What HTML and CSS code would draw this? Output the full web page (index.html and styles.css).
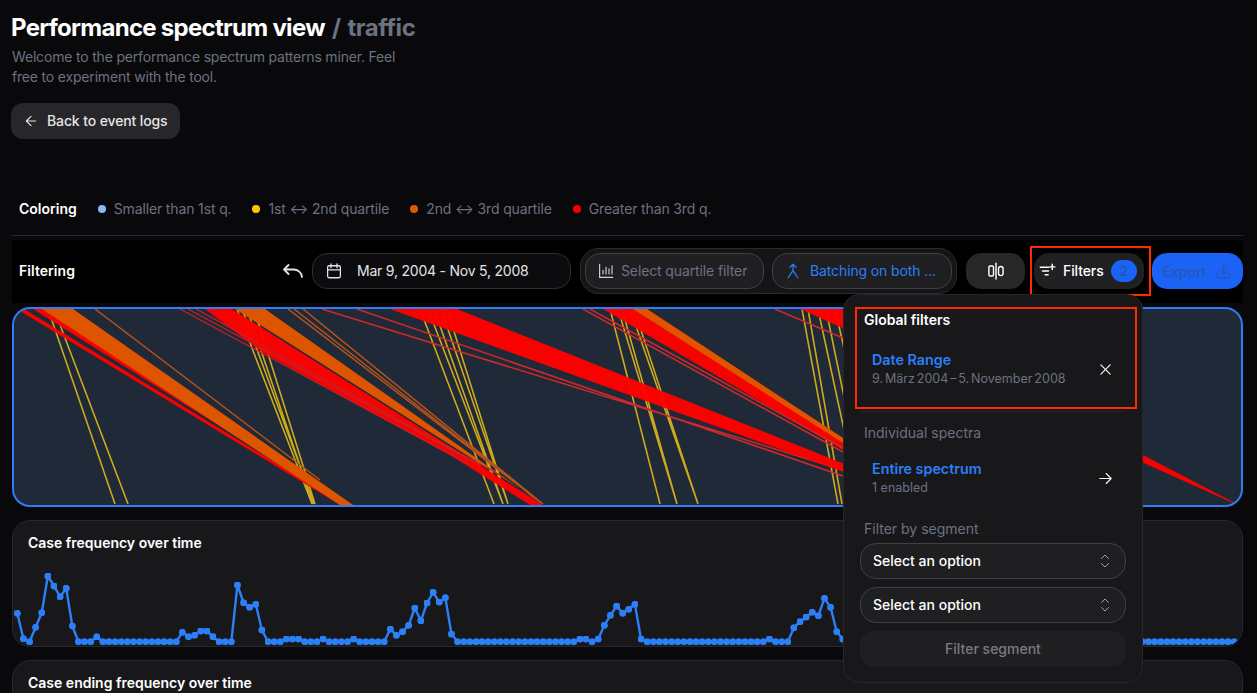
FILE: index.html
```html
<!DOCTYPE html>
<html lang="en">
<head>
<meta charset="utf-8">
<title>Performance spectrum view</title>
<link rel="stylesheet" href="styles.css">
</head>
<body>
<main class="page">
  <header class="head">
    <h1 class="title">Performance spectrum view <span class="title-sub">/ traffic</span></h1>
    <p class="intro">Welcome to the performance spectrum patterns miner. Feel free to experiment with the tool.</p>
    <a class="back">
      <svg class="ico" viewBox="0 0 24 24"><path d="M19 12H5M12 19l-7-7 7-7"/></svg>
      Back to event logs
    </a>
  </header>

  <section class="legend">
    <strong class="legend-title">Coloring</strong>
    <span class="legend-item"><i class="dot dot-blue"></i>Smaller than 1st q.</span>
    <span class="legend-item"><i class="dot dot-yellow"></i>1st ↔ 2nd quartile</span>
    <span class="legend-item"><i class="dot dot-orange"></i>2nd ↔ 3rd quartile</span>
    <span class="legend-item"><i class="dot dot-red"></i>Greater than 3rd q.</span>
  </section>

  <section class="bar">
    <strong class="bar-title">Filtering</strong>
    <svg class="ico undo" viewBox="0 0 20 20"><path d="M5.500 4 1 8.500 5.500 13M1 8.500h9.500a8.500 8 0 0 1 8.500 7.500"/></svg>
    <div class="pill date">
      <svg class="ico" viewBox="0 0 24 24"><rect x="3.500" y="5" width="17" height="16" rx="2"/><path d="M8 2.500v5M16 2.500v5M3.500 10.500h17"/></svg>
      <span>Mar 9, 2004 - Nov 5, 2008</span>
    </div>
    <div class="group">
      <div class="pill quartile">
        <svg class="ico" viewBox="0 0 24 24"><path d="M3.500 3v17.500H21M8 16v-5M12 16V7M16 16v-7M20 16V5"/></svg>
        <span>Select quartile filter</span>
      </div>
      <div class="pill batching">
        <svg class="ico" viewBox="0 0 24 24"><path d="M8 7l4-4 4 4M12 3v8.500L5.500 21M12 11.500 18.500 21"/></svg>
        <span>Batching on both ...</span>
      </div>
    </div>
    <div class="solid split">
      <svg class="ico" viewBox="0 0 24 24"><rect x="3.500" y="6" width="5.500" height="12" rx="1.500"/><path d="M12 2.500v19"/><rect x="15" y="6.500" width="5.500" height="11" rx="2.700"/></svg>
    </div>
    <div class="filters-wrap">
      <div class="solid filters">
        <svg class="ico" viewBox="0 0 24 24"><path d="M3 7h11M6 12h8M9.500 17h4M19 3v7M15.500 6.500h7"/></svg>
        <span>Filters</span>
        <b class="badge">2</b>
      </div>
      <div class="mark"></div>
      <aside class="pop">
        <div class="global">
          <h3 class="pop-strong">Global filters</h3>
          <div class="rule-row">
            <div>
              <div class="rule-name">Date Range</div>
              <div class="rule-sub">9. März 2004 – 5. November 2008</div>
            </div>
            <svg class="ico rule-ico" viewBox="0 0 24 24"><path d="M5.500 5.500l13 13M18.500 5.500l-13 13"/></svg>
          </div>
        </div>
        <hr class="pop-rule">
        <h3 class="pop-label first">Individual spectra</h3>
        <div class="rule-row entire">
          <div>
            <div class="rule-name">Entire spectrum</div>
            <div class="rule-sub">1 enabled</div>
          </div>
          <svg class="ico rule-ico" viewBox="0 0 24 24"><path d="M4 12h16M13 5l7 7-7 7"/></svg>
        </div>
        <h3 class="pop-label second">Filter by segment</h3>
        <div class="select">Select an option
          <svg class="chev" viewBox="0 0 10 14"><path d="M1.500 4.500 5 1l3.500 3.500M1.500 9.500 5 13l3.500-3.500"/></svg>
        </div>
        <div class="select">Select an option
          <svg class="chev" viewBox="0 0 10 14"><path d="M1.500 4.500 5 1l3.500 3.500M1.500 9.500 5 13l3.500-3.500"/></svg>
        </div>
        <div class="segment-btn">Filter segment</div>
      </aside>
    </div>
    <div class="export">
      <span>Export</span>
      <svg class="ico" viewBox="0 0 24 24"><path d="M3.500 15v4a2 2 0 0 0 2 2h13a2 2 0 0 0 2-2v-4M12 3v13M7 11l5 5 5-5"/></svg>
    </div>
  </section>

  <section class="spectrum">
    <svg class="spectrum-svg" viewBox="14 309 1227 196">
      <g class="yl">
        <path d="M48 309 115 504M54 309 128 504"/>
        <path d="M237 309 312 504M242 309 314 504M247 309 313 504M254 309 315 504"/>
        <path d="M420 309 494 504M428 309 503 504M434 309 503 504M441 309 508 504M447 309 508 504"/>
        <path d="M610 309 660 504M618 309 677 504M622 309 677 504M630 309 698 504M634 309 698 504"/>
        <path d="M802 309 838 504M808 309 842 504M818 309 860 504M826 309 866 504M835 309 880 504"/>
      </g>
      <polygon class="rd" points="33,309 60,309 353,505 345,505"/>
      <polygon class="rd" points="20,311 24,309 345,505 340,505"/>
      <polygon class="or" points="42,309 73,309 353,505 340,505"/>
      <path class="thin-or" d="M95 309 320 480"/>
      <polygon class="rd" points="205,309 232,309 543,505 530,505 450,455 262,352"/>
      <polygon class="or" points="235,309 265,309 543,505 533,497"/>
      <path class="thin-or" d="M288 309 543 504M294 309 543 504M303 309 543 504"/>
      <path class="thin-rd" d="M322 309 843 470M357 309 843 476"/>
      <path class="thin-dk" d="M180 309 470 465M188 309 480 465M196 309 500 475"/>
      <polygon class="rd" points="390,309 457,309 947,505 935,505"/>
      <polygon class="rd" points="603,309 647,309 843,438 843,450"/>
      <polygon class="or" points="633,309 647,309 843,438 843,443"/>
      <path class="thin-rd" d="M583 309 843 452M590 309 843 448"/>
      <polygon class="rd" points="800,309 863,309 1235,503 1233,503"/>
      <path class="thin-rd" d="M775 309 843 338"/>
    </svg>
  </section>

  <section class="card">
    <h2 class="card-title">Case frequency over time</h2>
    <svg class="chart" viewBox="12 560 1230 87">
      <defs><marker id="pt" viewBox="0 0 6 6" refX="3" refY="3" markerWidth="7" markerHeight="7" markerUnits="userSpaceOnUse"><circle class="pt" cx="3" cy="3" r="3"/></marker></defs>
      <path class="line" marker-start="url(#pt)" marker-mid="url(#pt)" marker-end="url(#pt)" d="M17.300 613.300l6.115 25.400l6.115 3l6.115-14.400l6.115-14.600l6.115-36.700l6.115 10l6.115 10.700l6.115-8.400l6.115 37.700l6.115 15.700h6.115h6.115l6.115-5l6.115 5h6.115h6.115h6.115h6.115h6.115h6.115h6.115h6.115h6.115h6.115h6.115h6.115l6.115-9.400l6.115 4.400l6.115-1.400l6.115-4.300h6.115l6.115 5.700l6.115 5h6.115h6.115l6.115-56.700l6.115 17.700l6.115 4.600l6.115-3l6.115 25.700l6.115 11.700h6.115h6.115l6.115-2.700h6.115h6.115l6.115 2.700h6.115h6.115l6.115-2.700l6.115 2.700h6.115h6.115h6.115l6.115-2.700l6.115 2.700h6.115h6.115h6.115h6.115l6.115-12.700l6.115 6.300l6.115-3.600l6.115-6.400l6.115-17.300l6.115 12.700l6.115-17.700l6.115-10.700l6.115 9.700l6.115-4.300l6.115 36.300l6.115 7.700h6.115h6.115h6.115h6.115h6.115h6.115h6.115h6.115h6.115h6.115h6.115h6.115h6.115h6.115h6.115h6.115h6.115h6.115h6.115l6.115-2.700h6.115l6.115 2.700l6.115-2.700l6.115-13.700l6.115-10l6.115-9.300l6.115 7.300l6.115-4l6.115-5l6.115 34.700l6.115 2.700h6.115h6.115h6.115h6.115h6.115h6.115h6.115h6.115h6.115h6.115h6.115h6.115h6.115h6.115h6.115h6.115h6.115h6.115h6.115l6.115-2.700l6.115 2.700h6.115h6.115l6.115-14l6.115-6l6.115-4.700l6.115-4.700l6.115 3.400l6.115-17.400l6.115 9l6.115 24.400l6.115 7.300l6.115 2.700h6.115h6.115h6.115h6.115h6.115h6.115h6.115h6.115h6.115h6.115h6.115h6.115h6.115h6.115h6.115h6.115h6.115h6.115h6.115h6.115h6.115h6.115h6.115h6.115h6.115h6.115h6.115h6.115h6.115h6.115h6.115h6.115h6.115h6.115h6.115h6.115h6.115h6.115h6.115h6.115h6.115h6.115h6.115h6.115h6.115h6.115h6.115h6.115h6.115h6.115h6.115h6.115h6.115h6.115h6.115h6.115h6.115h6.115h6.115h6.115h6.115h6.115h6.115"/>
    </svg>
  </section>

  <section class="card">
    <h2 class="card-title">Case ending frequency over time</h2>
  </section>
</main>
</body>
</html>
```

FILE: styles.css
```css
* { box-sizing: border-box; }
html, body { margin: 0; height: 100%; overflow: hidden; }
body {
  background: #09090b;
  color: #fff;
  font-family: Inter, "Liberation Sans", sans-serif;
  font-size: 14px;
}
.page { padding: 0 14px 0 12px; }
.ico {
  width: 20px; height: 20px; flex: none;
  fill: none; stroke: currentColor; stroke-width: 1.7;
  stroke-linecap: round; stroke-linejoin: round;
}

.head { height: 188px; padding-top: 14px; }
.title { margin: 0 0 0 -1px; font-size: 24px; line-height: 28px; font-weight: 700; letter-spacing: -0.72px; }
.title-sub { margin-left: 2px; color: #6b7280; letter-spacing: -0.45px; word-spacing: 1.5px; }
.intro { margin: 5px 0 0; width: 400px; line-height: 20px; color: #6b7280; font-size: 14px; letter-spacing: -0.18px; }
.back {
  display: inline-flex; align-items: center; gap: 8px;
  margin: 16px 0 0 -1px; height: 36px; padding: 0 12px 1px;
  background: #27272a; border-radius: 12px;
  font-weight: 500; color: #e4e4e7; letter-spacing: -0.12px;
}
.back .ico { width: 16px; height: 16px; }

.legend {
  display: flex; align-items: center; gap: 21px;
  height: 48px; padding: 0 0 6px 7px;
  border-bottom: 1px solid #27272a;
}
.legend-title, .bar-title { font-weight: 600; }
.legend-item { display: inline-flex; align-items: center; gap: 8px; color: #6b7280; letter-spacing: -0.14px; }
.dot { width: 8px; height: 8px; border-radius: 50%; }
.dot-blue { background: #8ab8f5; }
.dot-yellow { background: #fac800; }
.dot-orange { background: #de5a00; }
.dot-red { background: #f80000; }

.bar {
  display: flex; align-items: center;
  height: 63px; margin-top: 4px; padding: 0 0 1px 7px;
  background: #000;
}
.bar-title { margin: 0 auto 1px 0; letter-spacing: 0.05px; }
.undo { margin-right: 9px; color: #e4e4e7; stroke-width: 1.800; }
.pill {
  display: flex; align-items: center;
  height: 36px; border: 1px solid #3f3f46; border-radius: 15px;
  padding: 0 15px 1px; background: #1f1f22; white-space: nowrap; letter-spacing: -0.12px;
}
.date { width: 259px; gap: 14px; padding-left: 12px; background: #0c0c0e; color: #e4e4e7; border-color: #2f2f33; letter-spacing: -0.22px; }
.date .ico { width: 18px; height: 18px; }
.group {
  display: flex; gap: 8px; padding: 4px;
  margin: 0 9px 0 9px; height: 46px; width: 377px;
  border: 1px solid #2a2a2d; border-radius: 18px; background: #151517;
}
.quartile { width: 179px; gap: 6px; padding-left: 11px; color: #6b7280; }
.quartile .ico { width: 18px; height: 18px; color: #d4d4d8; stroke-width: 1.500; }
.batching { width: 180px; gap: 8px; padding-left: 11px; color: #2b7ff7; }
.batching .ico { width: 18px; height: 18px; }
.solid {
  display: flex; align-items: center; height: 36px;
  border-radius: 15px; background: #27272a;
}
.split { width: 59px; justify-content: center; margin-right: 9px; }
.filters-wrap { position: relative; margin-right: 8px; }
.filters {
  width: 110px; padding: 0 6px 1px 4px; gap: 7px;
  font-weight: 500; letter-spacing: -0.1px; background: #202023;
}
.filters .ico { width: 18px; height: 18px; stroke-width: 1.900; }
.badge {
  display: flex; align-items: center; justify-content: center; flex: none;
  width: 26px; height: 22px; margin-top: 1px; border-radius: 11px;
  background: #1a63f5; color: #2650b0; font-size: 13px; font-weight: 500;
}
.mark {
  position: absolute; left: -4px; top: -7px; width: 121px; height: 50px;
  border: 2px solid #ff2a00;
}
.export {
  display: flex; align-items: center; justify-content: center; gap: 9px;
  width: 91px; height: 36px; border-radius: 15px;
  background: #1a63f5; color: #2a55b5; font-weight: 500;
}
.export .ico { width: 17px; height: 17px; }

.pop {
  position: absolute; z-index: 5; right: 1px; top: 41px;
  width: 300px; height: 389px; padding: 12px 12px 0;
  background: #18181b; border: 1px solid #27272a; border-radius: 16px;
}
.pop-strong, .pop-label { margin: 0; font-size: 14px; line-height: 20px; }
.pop-strong { font-weight: 600; }
.pop-label { font-weight: 400; color: #6b7280; padding-left: 8px; }
.global {
  height: 102px; margin: 0 -7px 0 -1px; padding: 1px 7px 0 7px;
  border: 2px solid #ff2a00;
}
.rule-row { display: flex; align-items: center; justify-content: space-between; }
.global .rule-row { margin-top: 20px; padding: 0 14px 0 8px; }
.rule-name { font-size: 14.300px; font-weight: 600; line-height: 20px; color: #2b7ff7; }
.rule-sub { font-size: 12.500px; line-height: 18px; color: #6b7280; }
.global .rule-sub { word-spacing: -1.600px; }
.rule-ico { width: 17px; height: 17px; color: #f4f4f5; }
.pop-rule { border: 0; border-top: 1px solid #27272a; margin: 2px 4px 0; }
.first { margin-top: 11px; padding-left: 8px; }
.entire { margin-top: 16px; padding: 0 16px; }
.second { margin-top: 22px; padding-left: 8px; }
.select {
  display: flex; align-items: center; justify-content: space-between;
  height: 36px; margin: 4px 4px 8px;
  padding: 0 15px 1px 12px; border: 1px solid #3f3f46; border-radius: 16px;
  background: #1f1f22; font-weight: 500;
}
.select + .select { margin-top: 8px; }
.chev { width: 10px; height: 14px; fill: none; stroke: #a1a1aa; stroke-width: 1; stroke-linecap: round; stroke-linejoin: round; }
.segment-btn {
  display: flex; align-items: center; justify-content: center;
  height: 36px; margin: 8px 4px 0; padding-bottom: 1px; border-radius: 14px;
  background: #1f1f22; color: #7b7b80; font-weight: 500;
}

.spectrum {
  height: 200px; margin-top: 4px;
  border: 2px solid #2f7cf6; border-radius: 18px;
  background: #1f2937; overflow: hidden;
}
.spectrum-svg { display: block; width: 100%; height: 100%; }
.yl path { fill: none; stroke: #e0b818; stroke-width: 1.600; opacity: .9; }
.rd { fill: #ff0000; opacity: .97; }
.or { fill: #de5500; }
.thin-or { fill: none; stroke: #b7521c; stroke-width: 1.500; }
.thin-rd { fill: none; stroke: #d0292a; stroke-width: 1.500; }
.thin-dk { fill: none; stroke: #c9222a; stroke-width: 1.200; }

.card {
  height: 127px; margin-top: 13px; padding-top: 13px;
  background: #18181b; border: 1px solid #27272a; border-radius: 18px;
  overflow: hidden;
}
.card-title { margin: 0; padding-left: 15px; font-size: 14px; line-height: 17px; font-weight: 600; }
.chart { display: block; width: 1230px; height: 87px; margin: 9px 0 0 -1px; }
.line { fill: none; stroke: #2b7ff7; stroke-width: 2.400; stroke-linejoin: round; }
.pt { fill: #2b7ff7; }
```
